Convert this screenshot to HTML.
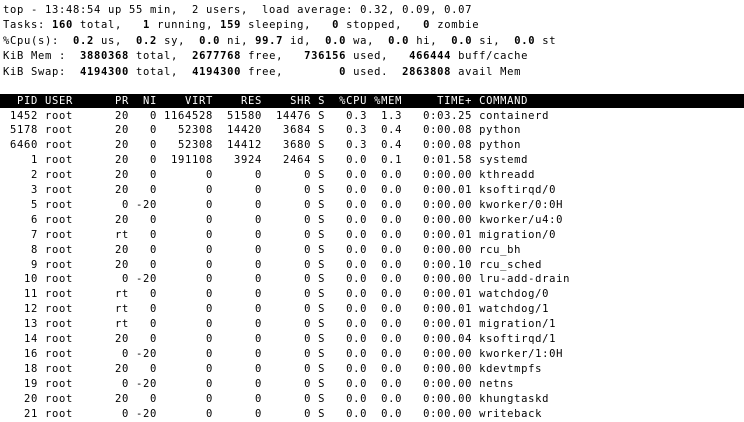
<!DOCTYPE html>
<html><head><meta charset="utf-8"><style>
html,body{margin:0;padding:0;background:#fff;width:744px;height:416px;overflow:hidden}
pre{margin:0;position:absolute;left:3px;font-family:"DejaVu Sans Mono","Liberation Mono",monospace;font-size:10.5px;letter-spacing:0.68px;color:#000}
#s{top:2.5px;line-height:15.5px}
#t{top:108.5px;line-height:14.9px}
b{font-weight:bold}
#bar{position:absolute;left:0;top:94px;width:744px;height:14px;background:#000}
#h{top:94px;line-height:14px;color:#fff}
</style></head><body>
<pre id="s">top - 13:48:54 up 55 min,  2 users,  load average: 0.32, 0.09, 0.07
Tasks: <b>160</b> total,   <b>1</b> running, <b>159</b> sleeping,   <b>0</b> stopped,   <b>0</b> zombie
%Cpu(s):  <b>0.2</b> us,  <b>0.2</b> sy,  <b>0.0</b> ni, <b>99.7</b> id,  <b>0.0</b> wa,  <b>0.0</b> hi,  <b>0.0</b> si,  <b>0.0</b> st
KiB Mem :  <b>3880368</b> total,  <b>2677768</b> free,   <b>736156</b> used,   <b>466444</b> buff/cache
KiB Swap:  <b>4194300</b> total,  <b>4194300</b> free,        <b>0</b> used.  <b>2863808</b> avail Mem</pre>
<div id="bar"></div>
<pre id="h">  PID USER      PR  NI    VIRT    RES    SHR S  %CPU %MEM     TIME+ COMMAND</pre>
<pre id="t"> 1452 root      20   0 1164528  51580  14476 S   0.3  1.3   0:03.25 containerd
 5178 root      20   0   52308  14420   3684 S   0.3  0.4   0:00.08 python
 6460 root      20   0   52308  14412   3680 S   0.3  0.4   0:00.08 python
    1 root      20   0  191108   3924   2464 S   0.0  0.1   0:01.58 systemd
    2 root      20   0       0      0      0 S   0.0  0.0   0:00.00 kthreadd
    3 root      20   0       0      0      0 S   0.0  0.0   0:00.01 ksoftirqd/0
    5 root       0 -20       0      0      0 S   0.0  0.0   0:00.00 kworker/0:0H
    6 root      20   0       0      0      0 S   0.0  0.0   0:00.00 kworker/u4:0
    7 root      rt   0       0      0      0 S   0.0  0.0   0:00.01 migration/0
    8 root      20   0       0      0      0 S   0.0  0.0   0:00.00 rcu_bh
    9 root      20   0       0      0      0 S   0.0  0.0   0:00.10 rcu_sched
   10 root       0 -20       0      0      0 S   0.0  0.0   0:00.00 lru-add-drain
   11 root      rt   0       0      0      0 S   0.0  0.0   0:00.01 watchdog/0
   12 root      rt   0       0      0      0 S   0.0  0.0   0:00.01 watchdog/1
   13 root      rt   0       0      0      0 S   0.0  0.0   0:00.01 migration/1
   14 root      20   0       0      0      0 S   0.0  0.0   0:00.04 ksoftirqd/1
   16 root       0 -20       0      0      0 S   0.0  0.0   0:00.00 kworker/1:0H
   18 root      20   0       0      0      0 S   0.0  0.0   0:00.00 kdevtmpfs
   19 root       0 -20       0      0      0 S   0.0  0.0   0:00.00 netns
   20 root      20   0       0      0      0 S   0.0  0.0   0:00.00 khungtaskd
   21 root       0 -20       0      0      0 S   0.0  0.0   0:00.00 writeback
</pre>
</body></html>
